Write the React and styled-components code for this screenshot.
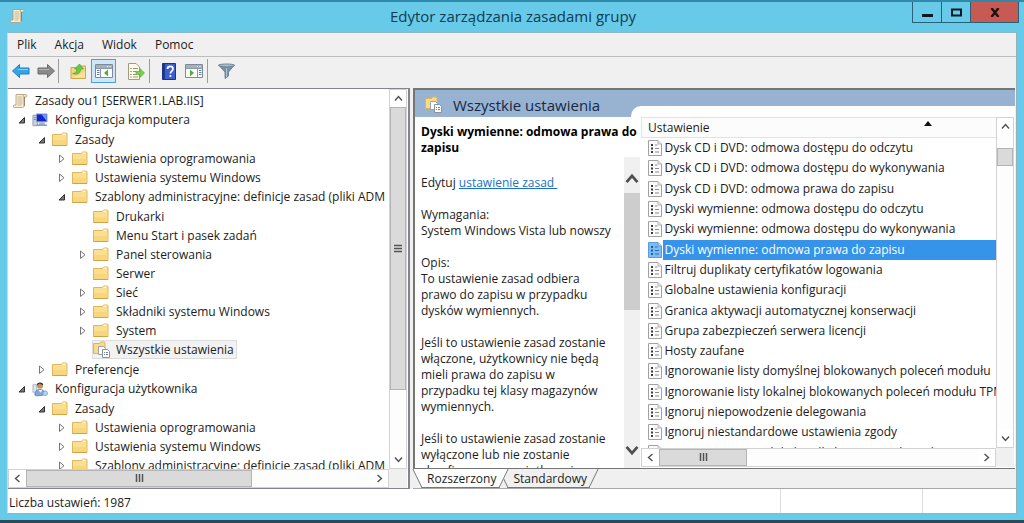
import React from "react";
import styled, { createGlobalStyle, css } from "styled-components";

const Global = createGlobalStyle`
  * { box-sizing: border-box; }
  body {
    margin: 0;
    background: #2c4a5c;
    color: #1c1c1c;
    font-family: "Open Sans", "Noto Sans", sans-serif;
    font-size: 12px;
    line-height: 16px;
  }
  button { font: inherit; color: inherit; margin: 0; padding: 0; border: 0; background: none; }
  ul { list-style: none; margin: 0; padding: 0; }
  svg { display: block; flex: none; }
`;

const Window = styled.div`
  display: flex;
  flex-direction: column;
  height: calc(100vh - 3px);
  min-height: 360px;
  padding: 0 7px 6px;
  background: #67cae8;
  border-top: 2px solid #2f89a8;
`;

const TitleBar = styled.header`
  display: grid;
  grid-template-columns: 107px 1fr 107px;
  flex: none;
  height: 30px;
  margin-right: -2px;
`;

const TitleIcon = styled.div`
  padding: 6px 2px;
`;

const Title = styled.h1`
  margin: 0;
  font-size: 15px;
  font-weight: 400;
  line-height: 28px;
  text-align: center;
  color: #0f3c50;
  white-space: nowrap;
`;

const Caption = styled.div`
  display: flex;
  height: 21px;
  border: 1px solid #2a6178;
  border-top: 0;
`;

const CaptionButton = styled.button`
  display: grid;
  place-items: center;
  flex: ${(p) => (p.$close ? 5 : 3)} 1 0;
  background: ${(p) => (p.$close ? "#c75a52" : "transparent")};
  & + & { border-left: 1px solid #2a6178; }
`;

const Client = styled.main`
  display: flex;
  flex-direction: column;
  flex: 1;
  min-height: 0;
  background: #f0f0f0;
  border: 1px solid #8fb4c2;
  border-left-color: #c9dbe2;
`;

const MenuBar = styled.nav`
  display: flex;
  flex: none;
  gap: 18px;
  height: 24px;
  padding: 0 9px;
  border-bottom: 1px solid #bdbdbd;
`;

const ToolBar = styled.div`
  display: flex;
  align-items: center;
  flex: none;
  height: 31px;
  padding: 0 0 3px;
`;

const ToolButton = styled.button`
  display: grid;
  place-items: center;
  width: 25px;
  height: 24px;
  border: 1px solid ${(p) => (p.$active ? "#4aa0dc" : "transparent")};
  background: ${(p) => (p.$active ? "#cfe6f7" : "transparent")};
`;

const ToolGap = styled.span`
  width: ${(p) => p.$w}px;
`;

const ToolSeparator = styled.span`
  width: 1px;
  height: 24px;
  margin: 0 6px 0 0;
  background: #9c9c9c;
`;

const Body = styled.div`
  display: grid;
  grid-template-columns: 402px minmax(0, 1fr);
  grid-template-rows: minmax(0, 1fr);
  gap: 3px;
  flex: 1;
  min-height: 0;
`;

const TreePane = styled.section`
  display: grid;
  grid-template: minmax(0, 1fr) 19px / minmax(0, 1fr) 18px;
  padding-right: 1px;
  background: #fff;
  border: 1px solid #82858a;
  border-left: 0;
  border-width: 1px 2px 1px 0;
`;

const TreeView = styled.div`
  overflow: hidden;
  padding: 2px 0 0 4px;
`;

const Branch = styled.ul`
  padding-left: ${(p) => (p.$depth > 1 ? 20 : 0)}px;
  margin: ${(p) => (p.$depth === 4 ? "1px 0 1px 1px" : p.$depth === 2 ? "1px 0 0" : 0)};
`;

const TreeRow = styled.div`
  display: flex;
  align-items: center;
  height: 19px;
  white-space: nowrap;
`;

const Twisty = styled.button`
  display: flex;
  align-items: center;
  flex: none;
  width: 20px;
  height: 19px;
  padding-left: 6px;
`;

const NodeLabel = styled.span`
  display: flex;
  align-items: center;
  gap: ${(p) => (p.$selected ? 5 : 7)}px;
  height: 19px;
  ${(p) =>
    p.$selected &&
    css`
      padding: 0 3px 0 1px;
      margin-left: -1px;
      background: #f2f2f2;
      box-shadow: inset 0 0 0 1px #dcdcdc;
    `}
`;

const Corner = styled.div`
  background: #f0f0f0;
`;

const Bar = styled.div`
  display: flex;
  flex-direction: ${(p) => (p.$v ? "column" : "row")};
  min-width: 0;
  min-height: 0;
  background: ${(p) => (p.$flat ? "#f0f0f0" : "#fdfdfd")};
  border: ${(p) => (p.$flat ? 0 : 1)}px solid #d2d2d2;
`;

const BarButton = styled.button`
  display: grid;
  place-items: center;
  flex: none;
  width: ${(p) => (p.$v ? "auto" : "17px")};
  height: ${(p) => (p.$v ? (p.$flat ? "36px" : "17px") : "auto")};
  padding-top: ${(p) => (p.$flat === "up" ? 8 : 0)}px;
  background: ${(p) => (p.$flat ? "#f0f0f0" : "#fff")};
`;

const Track = styled.div`
  display: grid;
  flex: 1;
  min-width: 0;
  min-height: 0;
  ${(p) => (p.$v ? "grid-template-rows" : "grid-template-columns")}: ${(p) =>
    `${p.$parts[0]}fr ${p.$parts[1]}fr ${p.$parts[2]}fr`};
`;

const Thumb = styled.div`
  display: grid;
  place-items: center;
  ${(p) => (p.$v ? "grid-row" : "grid-column")}: 2;
  background: ${(p) => (p.$flat ? "#cdcdcd" : "#dadada")};
  border: ${(p) => (p.$flat ? 0 : 1)}px solid #b4b4b4;
`;

const ResultPane = styled.section`
  display: flex;
  flex-direction: column;
  min-width: 0;
`;

const ResultFrame = styled.div`
  display: flex;
  flex-direction: column;
  flex: 1;
  min-height: 0;
  margin-right: 1px;
  background: #fff;
  border: solid #757575;
  border-width: 2px 0 1px 2px;
`;

const Banner = styled.div`
  display: grid;
  grid-template-columns: 216px minmax(0, 1fr);
  flex: none;
  height: 27px;
  background: #98b2d2;
`;

const BannerTitle = styled.h2`
  display: flex;
  align-items: center;
  gap: 10px;
  margin: 0;
  padding: 2px 0 0 10px;
  font-size: 15px;
  font-weight: 400;
  color: #142a44;
  white-space: nowrap;
`;

const BannerTab = styled.div`
  align-self: end;
  height: 11px;
  background: #fff;
  border-top-left-radius: 10px;
`;

const Split = styled.div`
  display: grid;
  grid-template-columns: 226px minmax(0, 1fr);
  grid-template-rows: minmax(0, 1fr);
  flex: 1;
  min-height: 0;
`;

const Details = styled.div`
  display: flex;
  flex-direction: column;
  min-height: 0;
`;

const DetailsTitle = styled.h3`
  flex: none;
  margin: 0;
  padding: 7px 0 1px 6px;
  font-size: 12px;
  font-weight: 700;
  color: #000;
`;

const DetailsScroll = styled.div`
  display: grid;
  grid-template-columns: minmax(0, 1fr) 16px;
  grid-template-rows: minmax(0, 1fr);
  flex: 1;
  min-height: 0;
  margin-right: 1px;
`;

const DetailsText = styled.div`
  overflow: hidden;
  padding: 18px 0 0 6px;
  p { margin: 0 0 16px; white-space: pre-line; }
  a { color: #1a72c8; white-space: pre; }
`;

const ListPane = styled.div`
  display: grid;
  grid-template: minmax(0, 1fr) 19px / minmax(0, 1fr) 18px;
  min-height: 0;
  margin: 0 1px 1px 0;
`;

const ListView = styled.div`
  overflow: hidden;
`;

const Table = styled.table`
  width: 100%;
  height: 346px;
  table-layout: fixed;
  border-collapse: collapse;
`;

const HeadCell = styled.th`
  height: 20px;
  padding: 0;
  font-weight: 400;
  text-align: left;
  background: #fcfcfc;
  border: 1px solid #e2e2e2;
  border-width: 1px 0 1px 1px;
`;

const SortButton = styled.button`
  display: flex;
  align-items: start;
  justify-content: space-between;
  width: 100%;
  padding: 1px 64px 1px 6px;
`;

const Cell = styled.td`
  padding: 0 0 0 6px;
`;

const CellLine = styled.div`
  display: flex;
  align-items: center;
  gap: 1px;
`;

const CellText = styled.span`
  flex: 1;
  min-width: 0;
  padding: 2px;
  overflow: hidden;
  white-space: nowrap;
  color: ${(p) => (p.$selected ? "#fff" : "inherit")};
  background: ${(p) => (p.$selected ? "#3593ea" : "transparent")};
`;

const Tabs = styled.div`
  display: flex;
  flex: none;
  height: 20px;
  border-bottom: 1px solid #a8a8a8;
`;

const Tab = styled.button`
  position: relative;
  z-index: ${(p) => (p.$active ? 2 : 1)};
  height: 19px;
  padding: 1px ${(p) => (p.$active ? 12 : 10)}px 0 14px;
  margin-left: ${(p) => (p.$active ? 0 : -9)}px;
  &::before,
  &::after {
    content: "";
    position: absolute;
    z-index: -1;
    top: 0;
    bottom: 0;
    background: ${(p) => (p.$active ? "#fff" : "#f0f0f0")};
    border-bottom: 1px solid #777;
  }
  &::before {
    left: 4px;
    right: 40%;
    border-left: 1px solid #777;
    transform: skewX(26deg);
  }
  &::after {
    left: 40%;
    right: 4px;
    border-right: 1px solid #777;
    transform: skewX(-26deg);
  }
`;

const StatusBar = styled.footer`
  display: grid;
  grid-template-columns: minmax(0, 1fr) 142px 94px;
  flex: none;
  height: 24px;
  background: #fff;
`;

const StatusCell = styled.div`
  padding: 6px 1px 2px;
  & + & { border-left: 1px solid #dcdcdc; }
`;

/* ---------- icons ---------- */

const ScrollIcon = () => (
  <svg width="16" height="16" viewBox="0 0 16 16">
    <path d="M4 1.500h10.200c1 0 1 2.500 0 2.500H12v9c0 1-.6 1.500-1.500 1.500H2c-1 0-1-2.500 0-2.500h2z" fill="#f8edcf" stroke="#a8987a" strokeWidth=".8" />
    <path d="M12 4c-1.200 0-1-2.500.2-2.500" fill="none" stroke="#a8987a" strokeWidth=".8" />
    <path d="M5.500 4h4.500M5.500 6h5M5.500 8h5M5.500 10h5M5.500 12h4" stroke="#b8a88c" strokeWidth=".8" />
    <path d="M12.400 4v9" stroke="#8d8068" />
  </svg>
);

const FolderIcon = () => (
  <svg width="16" height="16" viewBox="0 0 16 16">
    <path d="M.5 2.500h9l1-1.500h4l.5 1v11.500H.5z" fill="#fbdf90" stroke="#dfb65c" />
    <path d="M1 8h13.500v5H1z" fill="#f8d67e" />
    <path d="M10.500 1.500h3v1.500h-3z" fill="#fff4cc" />
    <path d="M.5 13.500h14.500" stroke="#cfa348" />
  </svg>
);

const AllSettingsIcon = () => (
  <svg width="18" height="17" viewBox="0 0 18 17">
    <path d="M.5 2.500h6l1-1.500h4l.5 1V12.500H.5z" fill="#fadb88" stroke="#dcb45a" />
    <path d="M5.500 5.500h5l2 2v6h-7z" fill="#fff" stroke="#9aa2aa" />
    <path d="M9.500 8.500h5l2 2v6h-7z" fill="#fff" stroke="#8b939b" />
    <path d="M11 11.500h1M13 11.500h2M11 13.500h1M13 13.500h2" stroke="#6f7f96" />
  </svg>
);

const ComputerIcon = () => (
  <svg width="16" height="16" viewBox="0 0 17 16">
    <path d="M1 3h5v11H1z" fill="#c9d4e4" stroke="#8b9ab4" />
    <path d="M2 5.500h3M2 7.500h3" stroke="#7b8aa6" />
    <path d="M4.500 1.500h11.500v8.500H4.500z" fill="#1626c8" stroke="#a7b4c8" />
    <path d="M10 2h5.500v7z" fill="#6f9af0" />
    <path d="M8 10.500h5l1 2.500H7z" fill="#9fb2cc" />
    <path d="M5 13.500h11" stroke="#7f93b2" strokeWidth="1.500" />
  </svg>
);

const UserIcon = () => (
  <svg width="16" height="16" viewBox="0 0 17 16">
    <path d="M1 3.500h4v8H1z" fill="#dbe3ec" stroke="#a9b5c3" />
    <path d="M3 14.500c0-4 2-6 5-6s6 1.500 6 4.500c0 2-11 3-11 1.500z" fill="#7fa8d8" stroke="#527aa8" strokeWidth=".8" />
    <circle cx="8.500" cy="4.500" r="3.200" fill="#c98d58" />
    <path d="M5 4C5 0 12 0 12 4c-2-.5-3-1.500-4-1.500S6 4 5 4z" fill="#3d3330" />
    <path d="M7 9l2 3 2-3z" fill="#e8f0fa" />
    <circle cx="14" cy="12.500" r="2.500" fill="#b8d4ee" stroke="#6f98c4" strokeWidth=".8" />
  </svg>
);

const PolicyIcon = ({ selected }) => (
  <svg width="14" height="16" viewBox="0 0 14 16">
    <path d="M.5.5h9.500l3.500 3.500v11.500H.5z" fill={selected ? "#7cbcf4" : "#fbfbfb"} stroke={selected ? "#5a9cd6" : "#a2a2a2"} />
    <path d="M10 .5v3.500h3.500" fill={selected ? "#b8dcfa" : "#e8e8e8"} stroke={selected ? "#5a9cd6" : "#b4b4b4"} />
    <path d="M3 4h2v2H3zM3 7.500h2v2H3zM3 11h2v2H3z" fill={selected ? "#1d5fa8" : "#3c3c3c"} />
    <path d="M7 5h2.500M7 8.500h4M7 12h4" stroke={selected ? "#2a6cb0" : "#8a8a8a"} />
  </svg>
);

const ArrowIcon = ({ right }) => (
  <svg width="18" height="16" viewBox="0 0 18 16">
    <path
      d={right ? "M17.500 8L10.500 1.500v3.500H1v6h9.500v3.500z" : "M.5 8l7-6.500v3.500H17v6H7.500v3.500z"}
      fill={right ? "#8a8a8a" : "#36a3e6"}
      stroke={right ? "#6c6c6c" : "#1f7fc0"}
    />
    <path d={right ? "M2 6.500h10" : "M6 6.500h10"} stroke={right ? "#b4b4b4" : "#8fd3fa"} />
  </svg>
);

const FolderUpIcon = () => (
  <svg width="17" height="17" viewBox="0 0 17 17">
    <path d="M1 4.500h8l1-1.500h5.500v12.500H1z" fill="#f7d680" stroke="#cfa648" />
    <path d="M2 14.500c4-1 8-2 13-6v6z" fill="#fbe6a6" />
    <path d="M2.500 10.500c3 0 4-2 4.500-4.500H4.500L9.500 1l4 5h-2.500c-.5 4-3.500 6.500-8.500 4.500z" fill="#66c846" stroke="#3fa325" strokeWidth=".6" />
  </svg>
);

const PaneIcon = ({ right }) => (
  <svg width="18" height="16" viewBox="0 0 18 16">
    <path d="M.5 1.500h17v13H.5z" fill="#fff" stroke="#7e8a98" />
    <path d="M1 2h16v3H1z" fill="#a3b0c0" />
    <path d="M12 3.500h1M14.500 3.500h1" stroke="#fff" />
    <path d={right ? "M12.500 5v9M1 5.500h16" : "M5.500 5v9M1 5.500h16"} stroke="#8d98a6" />
    <path d={right ? "M14 7.500h2.500M14 9.500h2.500M14 11.500h2.500" : "M2 7.500h2.500M2 9.500h2.500M2 11.500h2.500"} stroke="#5a7fae" />
    <path d={right ? "M5 6.500l4 3.500-4 3.500z" : "M13 6.500L9 10l4 3.500z"} fill="#55ad3c" />
  </svg>
);

const ExportIcon = () => (
  <svg width="18" height="17" viewBox="0 0 18 17">
    <path d="M1.500.5H9L12.500 4v12.500h-11z" fill="#fffbe8" stroke="#a39a80" />
    <path d="M3.500 5.500h1M3.500 8.500h1M3.500 11.500h1M3.500 14h1" stroke="#555" />
    <path d="M6 5.500h5M6 8.500h3M6 11.500h3M6 14h5" stroke="#9a927c" />
    <path d="M9 8.500h4V5.500l4.500 4.500-4.500 4.500v-3H9z" fill="#74d052" stroke="#4aae2c" strokeWidth=".6" />
  </svg>
);

const HelpIcon = () => (
  <svg width="14" height="17" viewBox="0 0 14 17">
    <path d="M.5.5h13v16H.5z" fill="#3c5fcc" stroke="#1c3388" />
    <path d="M1 1h2v15H1z" fill="#1d388f" />
    <path d="M5.500 6c0-3.500 5.500-3.500 5.500 0 0 2-2.600 2.200-2.600 4.500" fill="none" stroke="#fff" strokeWidth="1.700" />
    <circle cx="8.400" cy="13" r="1.100" fill="#fff" />
  </svg>
);

const FilterIcon = () => (
  <svg width="17" height="16" viewBox="0 0 17 16">
    <path d="M.5 2h16L10.500 9v4L7 15.500V9z" fill="#7692a6" stroke="#5d7688" strokeWidth=".8" />
    <ellipse cx="8.500" cy="2.400" rx="7.800" ry="1.500" fill="#a4bac9" stroke="#5d7688" strokeWidth=".7" />
    <path d="M8.500 5v9" stroke="#aec4d2" />
  </svg>
);

const Chevron = ({ dir, big }) => {
  const turn = { up: 0, right: 90, down: 180, left: 270 }[dir];
  const s = big ? 14 : 9;
  return (
    <svg width={s} height={s} viewBox="0 0 9 9">
      <path d="M1 6.500l3.500-4 3.500 4" transform={`rotate(${turn} 4.500 4.500)`} fill="none" stroke="#505050" strokeWidth={big ? 1.800 : 1.400} />
    </svg>
  );
};

const Grip = ({ v }) => (
  <svg width="9" height="9" viewBox="0 0 9 9">
    <path d={v ? "M0 1.500h8M0 4.500h8M0 7.500h8" : "M1.500 0v8M4.500 0v8M7.500 0v8"} stroke="#555" strokeWidth="1.500" />
  </svg>
);

const TwistyMark = ({ open }) => (
  <svg width="9" height="9" viewBox="0 0 9 9">
    {open ? (
      <path d="M6.500 2.500V8H1z" fill="#777" stroke="#333" />
    ) : (
      <path d="M1.500 1v7.500l4.500-3.750z" fill="#fff" stroke="#777" />
    )}
  </svg>
);

/* ---------- parts ---------- */

function ScrollBar({ v, flat, parts, grip, label }) {
  return (
    <Bar $v={v} $flat={flat} role="group" aria-label={label}>
      <BarButton $v={v} $flat={flat && "up"} aria-label={v ? "W górę" : "W lewo"}>
        <Chevron dir={v ? "up" : "left"} big={flat} />
      </BarButton>
      <Track $v={v} $parts={parts}>
        <Thumb $v={v} $flat={flat}>{grip && <Grip v={v} />}</Thumb>
      </Track>
      <BarButton $v={v} $flat={flat && "down"} aria-label={v ? "W dół" : "W prawo"}>
        <Chevron dir={v ? "down" : "right"} big={flat} />
      </BarButton>
    </Bar>
  );
}

const icons = {
  scroll: ScrollIcon,
  folder: FolderIcon,
  all: AllSettingsIcon,
  computer: ComputerIcon,
  user: UserIcon,
};

const closed = (label) => ({ label, open: false });

const tree = {
  label: "Zasady ou1 [SERWER1.LAB.IIS]",
  icon: "scroll",
  children: [
    {
      label: "Konfiguracja komputera",
      icon: "computer",
      open: true,
      children: [
        {
          label: "Zasady",
          open: true,
          children: [
            closed("Ustawienia oprogramowania"),
            closed("Ustawienia systemu Windows"),
            {
              label: "Szablony administracyjne: definicje zasad (pliki ADM",
              open: true,
              children: [
                { label: "Drukarki" },
                { label: "Menu Start i pasek zadań" },
                closed("Panel sterowania"),
                { label: "Serwer" },
                closed("Sieć"),
                closed("Składniki systemu Windows"),
                closed("System"),
                { label: "Wszystkie ustawienia", icon: "all", selected: true },
              ],
            },
          ],
        },
        closed("Preferencje"),
      ],
    },
    {
      label: "Konfiguracja użytkownika",
      icon: "user",
      open: true,
      children: [
        {
          label: "Zasady",
          open: true,
          children: [
            closed("Ustawienia oprogramowania"),
            closed("Ustawienia systemu Windows"),
            closed("Szablony administracyjne: definicje zasad (pliki ADM"),
          ],
        },
      ],
    },
  ],
};

const Spacer = styled.span`
  flex: none;
  width: 20px;
`;

function TreeNode({ node, depth }) {
  const Icon = icons[node.icon || "folder"];
  return (
    <li role="treeitem" aria-selected={!!node.selected}>
      <TreeRow>
        {depth > 0 &&
          (node.open === undefined ? (
            <Spacer />
          ) : (
            <Twisty aria-label={node.open ? "Zwiń" : "Rozwiń"}>
              <TwistyMark open={node.open} />
            </Twisty>
          ))}
        <NodeLabel $selected={node.selected}>
          <Icon />
          {node.label}
        </NodeLabel>
      </TreeRow>
      {node.children && (
        <Branch role="group" $depth={depth + 1}>
          {node.children.map((c) => (
            <TreeNode key={c.label} node={c} depth={depth + 1} />
          ))}
        </Branch>
      )}
    </li>
  );
}

const settings = [
  "Dysk CD i DVD: odmowa dostępu do odczytu",
  "Dysk CD i DVD: odmowa dostępu do wykonywania",
  "Dysk CD i DVD: odmowa prawa do zapisu",
  "Dyski wymienne: odmowa dostępu do odczytu",
  "Dyski wymienne: odmowa dostępu do wykonywania",
  "Dyski wymienne: odmowa prawa do zapisu",
  "Filtruj duplikaty certyfikatów logowania",
  "Globalne ustawienia konfiguracji",
  "Granica aktywacji automatycznej konserwacji",
  "Grupa zabezpieczeń serwera licencji",
  "Hosty zaufane",
  "Ignorowanie listy domyślnej blokowanych poleceń modułu",
  "Ignorowanie listy lokalnej blokowanych poleceń modułu TPM",
  "Ignoruj niepowodzenie delegowania",
  "Ignoruj niestandardowe ustawienia zgody",
  "Ignoruj ustawienia lokalne dla bezprzewodowych",
];

export default function App() {
  return (
    <>
      <Global />
      <Window>
        <TitleBar>
          <TitleIcon><ScrollIcon /></TitleIcon>
          <Title>Edytor zarządzania zasadami grupy</Title>
          <Caption>
            <CaptionButton aria-label="Minimalizuj">
              <svg width="11" height="9"><path d="M0 7.500h11" stroke="#0a1a22" strokeWidth="3" /></svg>
            </CaptionButton>
            <CaptionButton aria-label="Maksymalizuj">
              <svg width="11" height="9"><path d="M1 1.500h9v6H1z" fill="none" stroke="#0a1a22" strokeWidth="2" /></svg>
            </CaptionButton>
            <CaptionButton $close aria-label="Zamknij">
              <svg width="10" height="9"><path d="M1.500 0l7 9M8.500 0l-7 9" stroke="#1e1414" strokeWidth="2.400" /></svg>
            </CaptionButton>
          </Caption>
        </TitleBar>
        <Client>
          <MenuBar>
            <button>Plik</button>
            <button>Akcja</button>
            <button>Widok</button>
            <button>Pomoc</button>
          </MenuBar>
          <ToolBar>
            <ToolButton aria-label="Wstecz"><ArrowIcon /></ToolButton>
            <ToolButton aria-label="Dalej"><ArrowIcon right /></ToolButton>
            <ToolSeparator />
            <ToolGap $w={1} />
            <ToolButton aria-label="W górę"><FolderUpIcon /></ToolButton>
            <ToolButton $active aria-label="Drzewo konsoli"><PaneIcon /></ToolButton>
            <ToolGap $w={7} />
            <ToolButton aria-label="Eksportuj listę"><ExportIcon /></ToolButton>
            <ToolGap $w={1} />
            <ToolSeparator />
            <ToolButton aria-label="Pomoc"><HelpIcon /></ToolButton>
            <ToolButton aria-label="Okienko akcji"><PaneIcon right /></ToolButton>
            <ToolGap $w={1} />
            <ToolSeparator />
            <ToolButton aria-label="Filtr"><FilterIcon /></ToolButton>
          </ToolBar>
          <Body>
            <TreePane>
              <TreeView>
                <ul role="tree" aria-label="Drzewo konsoli">
                  <TreeNode node={tree} depth={0} />
                </ul>
              </TreeView>
              <ScrollBar v grip parts={[0, 281, 60]} label="Przewijanie drzewa w pionie" />
              <ScrollBar grip parts={[0, 226, 119]} label="Przewijanie drzewa w poziomie" />
              <Corner />
            </TreePane>
            <ResultPane>
              <ResultFrame>
                <Banner>
                  <BannerTitle><AllSettingsIcon />Wszystkie ustawienia</BannerTitle>
                  <BannerTab />
                </Banner>
                <Split>
                  <Details>
                    <DetailsTitle>Dyski wymienne: odmowa prawa do zapisu</DetailsTitle>
                    <DetailsScroll>
                      <DetailsText>
                        <p>Edytuj <a href="#edit">{"ustawienie zasad "}</a></p>
                        <p>{"Wymagania:\nSystem Windows Vista lub nowszy"}</p>
                        <p>{"Opis:\nTo ustawienie zasad odbiera\nprawo do zapisu w przypadku\ndysków wymiennych."}</p>
                        <p>{"Jeśli to ustawienie zasad zostanie\nwłączone, użytkownicy nie będą\nmieli prawa do zapisu w\nprzypadku tej klasy magazynów\nwymiennych."}</p>
                        <p>{"Jeśli to ustawienie zasad zostanie\nwyłączone lub nie zostanie\nskonfigurowane, użytkownicy"}</p>
                      </DetailsText>
                      <ScrollBar v flat parts={[0, 115, 119]} label="Przewijanie opisu" />
                    </DetailsScroll>
                  </Details>
                  <ListPane>
                    <ListView>
                      <Table>
                        <thead>
                          <tr>
                            <HeadCell scope="col" aria-sort="ascending">
                              <SortButton>
                                Ustawienie
                                <svg width="8" height="6"><path d="M0 6l4-5 4 5z" fill="#111" /></svg>
                              </SortButton>
                            </HeadCell>
                          </tr>
                        </thead>
                        <tbody>
                          {settings.map((s, i) => (
                            <tr key={s}>
                              <Cell>
                                <CellLine>
                                  <PolicyIcon selected={i === 5} />
                                  <CellText $selected={i === 5}>{s}</CellText>
                                </CellLine>
                              </Cell>
                            </tr>
                          ))}
                        </tbody>
                      </Table>
                    </ListView>
                    <ScrollBar v parts={[13, 18, 264]} label="Przewijanie listy w pionie" />
                    <ScrollBar grip parts={[0, 88, 231]} label="Przewijanie listy w poziomie" />
                    <Corner />
                  </ListPane>
                </Split>
              </ResultFrame>
              <Tabs role="tablist">
                <Tab $active role="tab" aria-selected="true">Rozszerzony</Tab>
                <Tab role="tab" aria-selected="false">Standardowy</Tab>
              </Tabs>
            </ResultPane>
          </Body>
          <StatusBar>
            <StatusCell>Liczba ustawień: 1987</StatusCell>
            <StatusCell />
            <StatusCell />
          </StatusBar>
        </Client>
      </Window>
    </>
  );
}
